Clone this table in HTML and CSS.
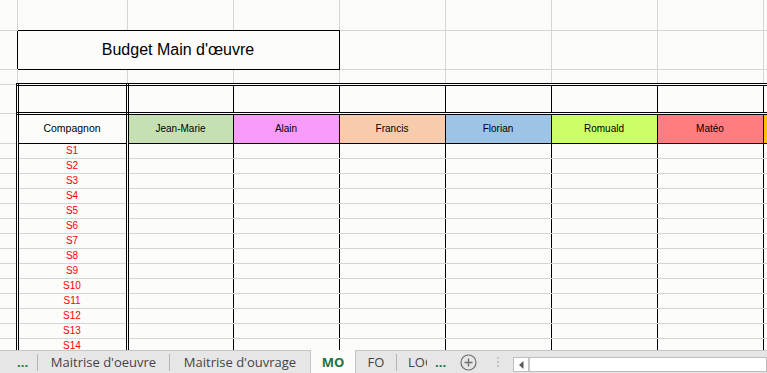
FILE: index.html
```html
<!DOCTYPE html>
<html lang="fr">
<head>
<meta charset="utf-8">
<title>Budget Main d'œuvre</title>
<link rel="stylesheet" href="styles.css">
</head>
<body>
<div class="app">
  <div class="sheet">
    <table class="grid">
      <colgroup>
        <col class="col-a"><col class="col-b">
        <col class="col-n"><col class="col-n"><col class="col-n"><col class="col-n"><col class="col-n"><col class="col-n">
        <col class="col-i">
      </colgroup>
      <tr class="r1">
        <td class="ca"></td><td class="tb"></td><td class="tb"></td><td class="tb"></td><td></td><td></td><td></td><td></td><td></td>
      </tr>
      <tr class="r2">
        <td class="ca ra"></td>
        <td class="title" colspan="3">Budget Main d'œuvre</td>
        <td class="lb"></td><td></td><td></td><td></td><td></td>
      </tr>
      <tr class="r3">
        <td class="ca"></td><td class="tt"></td><td class="tt"></td><td class="tt"></td><td></td><td></td><td></td><td></td><td></td>
      </tr>
      <tr class="r4">
        <td class="ca"></td>
        <td class="cb top"></td>
        <td class="cn top"></td><td class="cn top"></td><td class="cn top"></td><td class="cn top"></td><td class="cn top"></td><td class="cn top"></td>
        <td class="ci top"></td>
      </tr>
      <tr class="r5">
        <td class="ca"></td>
        <td class="cb head">Compagnon</td>
        <td class="cn head c-jm">Jean-Marie</td>
        <td class="cn head c-al">Alain</td>
        <td class="cn head c-fr">Francis</td>
        <td class="cn head c-fl">Florian</td>
        <td class="cn head c-ro">Romuald</td>
        <td class="cn head c-ma">Matéo</td>
        <td class="ci head c-or"></td>
      </tr>
      <tr class="rs"><td class="ca"></td><td class="cb s">S1</td><td class="cn"></td><td class="cn"></td><td class="cn"></td><td class="cn"></td><td class="cn"></td><td class="cn"></td><td class="ci"></td></tr>
      <tr class="rs"><td class="ca"></td><td class="cb s">S2</td><td class="cn"></td><td class="cn"></td><td class="cn"></td><td class="cn"></td><td class="cn"></td><td class="cn"></td><td class="ci"></td></tr>
      <tr class="rs"><td class="ca"></td><td class="cb s">S3</td><td class="cn"></td><td class="cn"></td><td class="cn"></td><td class="cn"></td><td class="cn"></td><td class="cn"></td><td class="ci"></td></tr>
      <tr class="rs"><td class="ca"></td><td class="cb s">S4</td><td class="cn"></td><td class="cn"></td><td class="cn"></td><td class="cn"></td><td class="cn"></td><td class="cn"></td><td class="ci"></td></tr>
      <tr class="rs"><td class="ca"></td><td class="cb s">S5</td><td class="cn"></td><td class="cn"></td><td class="cn"></td><td class="cn"></td><td class="cn"></td><td class="cn"></td><td class="ci"></td></tr>
      <tr class="rs"><td class="ca"></td><td class="cb s">S6</td><td class="cn"></td><td class="cn"></td><td class="cn"></td><td class="cn"></td><td class="cn"></td><td class="cn"></td><td class="ci"></td></tr>
      <tr class="rs"><td class="ca"></td><td class="cb s">S7</td><td class="cn"></td><td class="cn"></td><td class="cn"></td><td class="cn"></td><td class="cn"></td><td class="cn"></td><td class="ci"></td></tr>
      <tr class="rs"><td class="ca"></td><td class="cb s">S8</td><td class="cn"></td><td class="cn"></td><td class="cn"></td><td class="cn"></td><td class="cn"></td><td class="cn"></td><td class="ci"></td></tr>
      <tr class="rs"><td class="ca"></td><td class="cb s">S9</td><td class="cn"></td><td class="cn"></td><td class="cn"></td><td class="cn"></td><td class="cn"></td><td class="cn"></td><td class="ci"></td></tr>
      <tr class="rs"><td class="ca"></td><td class="cb s">S10</td><td class="cn"></td><td class="cn"></td><td class="cn"></td><td class="cn"></td><td class="cn"></td><td class="cn"></td><td class="ci"></td></tr>
      <tr class="rs"><td class="ca"></td><td class="cb s">S11</td><td class="cn"></td><td class="cn"></td><td class="cn"></td><td class="cn"></td><td class="cn"></td><td class="cn"></td><td class="ci"></td></tr>
      <tr class="rs"><td class="ca"></td><td class="cb s">S12</td><td class="cn"></td><td class="cn"></td><td class="cn"></td><td class="cn"></td><td class="cn"></td><td class="cn"></td><td class="ci"></td></tr>
      <tr class="rs"><td class="ca"></td><td class="cb s">S13</td><td class="cn"></td><td class="cn"></td><td class="cn"></td><td class="cn"></td><td class="cn"></td><td class="cn"></td><td class="ci"></td></tr>
      <tr class="rs"><td class="ca"></td><td class="cb s">S14</td><td class="cn"></td><td class="cn"></td><td class="cn"></td><td class="cn"></td><td class="cn"></td><td class="cn"></td><td class="ci"></td></tr>
    </table>
  </div>
  <div class="tabs">
    <div class="more more-left">...</div>
    <div class="sep"></div>
    <div class="tab tab-1">Maitrise d'oeuvre</div>
    <div class="sep"></div>
    <div class="tab tab-2">Maitrise d'ouvrage</div>
    <div class="tab tab-active">MO</div>
    <div class="tab tab-fo">FO</div>
    <div class="sep"></div>
    <div class="tab tab-lo">LOC</div>
    <div class="more more-right">...</div>
    <div class="add">
      <svg width="17" height="17" viewBox="0 0 17 17"><circle cx="8.5" cy="8.5" r="7.5" fill="none" stroke="#6e6e6e" stroke-width="1.2"/><path d="M8.5 4.5v8M4.5 8.5h8" stroke="#6e6e6e" stroke-width="1.4"/></svg>
    </div>
    <div class="vdots"><span></span><span></span><span></span></div>
    <div class="hscroll">
      <div class="hs-btn"><svg width="5" height="8" viewBox="0 0 5 8"><path d="M4.5 0v8L0 4z" fill="#5a5a5a"/></svg></div>
      <div class="hs-track"></div>
    </div>
  </div>
</div>
</body>
</html>
```
FILE: styles.css
```css
html, body {
  margin: 0;
  padding: 0;
}
body {
  width: 767px;
  height: 373px;
  overflow: hidden;
  background: #fcfdfa;
  font-family: "Liberation Sans", Arial, sans-serif;
}
.app {
  width: 767px;
  height: 373px;
  display: flex;
  flex-direction: column;
}
.sheet {
  height: 350px;
  overflow: hidden;
  background: #fcfdfa;
}
.grid {
  border-collapse: collapse;
  table-layout: fixed;
  width: 823px;
}
.col-a { width: 17px; }
.col-b { width: 110px; }
.col-n { width: 106px; }
.col-i { width: 60px; }

.grid td {
  padding: 0;
  border: 1px solid #d6d6d6;
  font-size: 10px;
  line-height: 1;
  text-align: center;
  vertical-align: middle;
  color: #000;
  overflow: hidden;
  white-space: nowrap;
}
.grid tr:first-child td { border-top: none; }
.grid td.ca { border-left: none; }

.r1 { height: 30px; }
.r2 { height: 39px; }
.r3 { height: 15px; }
.r4 { height: 29px; }
.r5 { height: 30px; }
.rs { height: 15px; }

.grid td.tb { border-bottom: 1px solid #000; }
.grid td.tt { border-top: 1px solid #000; }
.grid td.ra { border-right: 1px solid #000; }
.grid td.lb { border-left: 1px solid #000; }
.grid td.title {
  border: 1px solid #000;
  font-size: 16px;
  font-family: "Liberation Sans", Arial, sans-serif;
}

.grid td.cb {
  border-left: 3px double #000;
  border-right: 3px double #000;
}
.grid td.cn {
  border-left: 1px solid #000;
  border-right: 1px solid #000;
}
.grid td.ci {
  border-left: 1px solid #000;
}
.grid td.top {
  border-top: 3px double #000;
  border-bottom: 3px double #000;
}
.grid td.head {
  border-bottom: 1px solid #000;
}
.grid td.cb.head {
  font-size: 10.5px;
}
.grid td.s {
  color: #ff0000;
  font-size: 10px;
}
.c-jm { background: #c6e0b4; }
.c-al { background: #f99bf9; }
.c-fr { background: #f8cbad; }
.c-fl { background: #9dc3e6; }
.c-ro { background: #ccff66; }
.c-ma { background: #ff7c80; }
.c-or { background: #ffc000; }

/* Sheet tabs bar */
.tabs {
  height: 22px;
  border-top: 1px solid #c6c6c6;
  background: #e6e6e6;
  display: flex;
  align-items: stretch;
  font-family: "Open Sans", "Noto Sans", sans-serif;
  font-size: 13px;
  color: #444;
}
.more {
  color: #217346;
  font-weight: bold;
  font-size: 13px;
  display: flex;
  align-items: center;
  letter-spacing: 0;
}
.more-left {
  width: 37px;
  padding-left: 17px;
  box-sizing: border-box;
}
.more-right {
  width: 28px;
  padding-left: 8px;
  box-sizing: border-box;
}
.sep {
  width: 1px;
  align-self: center;
  height: 17px;
  background: #b4b4b4;
}
.tab {
  display: flex;
  align-items: center;
  justify-content: center;
  white-space: nowrap;
  overflow: hidden;
  box-sizing: border-box;
}
.tab-1 { width: 131px; }
.tab-2 { width: 140px; }
.tab-active {
  width: 46px;
  margin-top: -1px;
  background: #fcfdfa;
  border-left: 1px solid #c6c6c6;
  border-right: 1px solid #c6c6c6;
  color: #217346;
  font-weight: bold;
}
.tab-fo { width: 40px; }
.tab-lo {
  width: 30px;
  justify-content: flex-start;
  padding-left: 11px;
  overflow: hidden;
}
.add {
  width: 27px;
  display: flex;
  align-items: center;
  padding-left: 5px;
  box-sizing: border-box;
}
.vdots {
  width: 31px;
  display: flex;
  flex-direction: column;
  align-items: center;
  justify-content: center;
  gap: 2px;
}
.vdots span {
  width: 2px;
  height: 2px;
  background: #c4c4c4;
}
.hscroll {
  width: 254px;
  height: 15px;
  margin-top: 6px;
  box-sizing: border-box;
  border: 1px solid #bdbdbd;
  background: #fff;
  display: flex;
}
.hs-btn {
  width: 14px;
  border-right: 2px solid #c6c6c6;
  display: flex;
  align-items: center;
  justify-content: center;
}
.hs-track {
  flex: 1;
}
```
